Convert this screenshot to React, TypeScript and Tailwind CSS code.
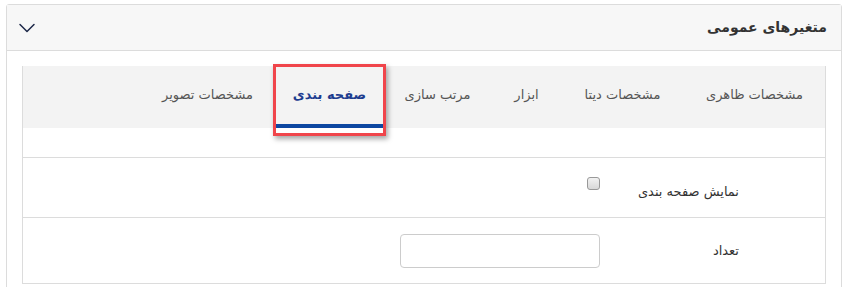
import { ChevronDown } from "lucide-react";

const TABS = [
  { label: "مشخصات ظاهری", w: "w-[141px]" },
  { label: "مشخصات دیتا", w: "w-[123px]" },
  { label: "ابزار", w: "w-[69px]" },
  { label: "مرتب سازی", w: "w-[109px]" },
  { label: "صفحه بندی", w: "w-[107px]", active: true },
  { label: "مشخصات تصویر", w: "w-[137px]" },
];

export default function App() {
  return (
    <div
      dir="rtl"
      className="w-[842px] h-[287px] overflow-hidden bg-white pt-[4px] pl-[2px] font-['Tahoma','DejaVu_Sans',sans-serif]"
    >
      <div className="w-[836px] h-[300px] rounded-t-[3px] border border-[#dcdcdc]">
        {/* header */}
        <div className="h-[46px] bg-[#f7f7f7] border-b border-[#dcdcdc] flex items-center justify-between pr-[14px] pl-[6px]">
          <span className="text-[14px] font-bold text-[#333]">متغیرهای عمومی</span>
          <ChevronDown className="w-[28px] h-[28px] text-[#1f2a4a]" strokeWidth={1.3} />
        </div>

        {/* body */}
        <div className="px-[15px] pt-[15px]">
          <div className="border-x border-b border-[#dcdcdc]">
            {/* tabs */}
            <div className="flex h-[62px] bg-[#f3f3f3]">
              {TABS.map((t) => (
                <div
                  key={t.label}
                  className={`relative ${t.w} flex items-center justify-center text-[13px] ${
                    t.active ? "text-[#1d3c8f] font-bold" : "text-[#555]"
                  }`}
                >
                  <span className="-mt-[4px]">{t.label}</span>
                  {t.active && (
                    <>
                      <div className="absolute bottom-0 left-0 right-0 h-[4px] bg-[#0d47a1]" />
                      <div className="absolute -top-[2px] -bottom-[8px] -left-[3px] -right-[3px] border-[3px] border-[#f0454b] shadow-[2px_3px_5px_rgba(0,0,0,0.35)]" />
                    </>
                  )}
                </div>
              ))}
            </div>

            <div className="h-[30px] border-b border-[#dcdcdc]" />

            {/* row: checkbox */}
            <div className="h-[60px] border-b border-[#dcdcdc] flex">
              <div className="w-[225px] pr-[86px] flex items-center pt-[8px] text-[13px] text-[#333]">
                نمایش صفحه بندی
              </div>
              <div className="flex items-center pb-[8px]">
                <span className="block w-[13px] h-[13px] rounded-[3px] border border-[#999] bg-gradient-to-b from-[#f2f2f2] to-[#d8d8d8]" />
              </div>
            </div>

            {/* row: count */}
            <div className="h-[65px] flex">
              <div className="w-[225px] pr-[86px] flex items-center text-[13px] text-[#333]">
                تعداد
              </div>
              <div className="flex items-center">
                <input
                  className="w-[200px] h-[34px] rounded-[4px] border border-[#ccc] bg-white outline-none"
                />
              </div>
            </div>
          </div>
        </div>
      </div>
    </div>
  );
}
